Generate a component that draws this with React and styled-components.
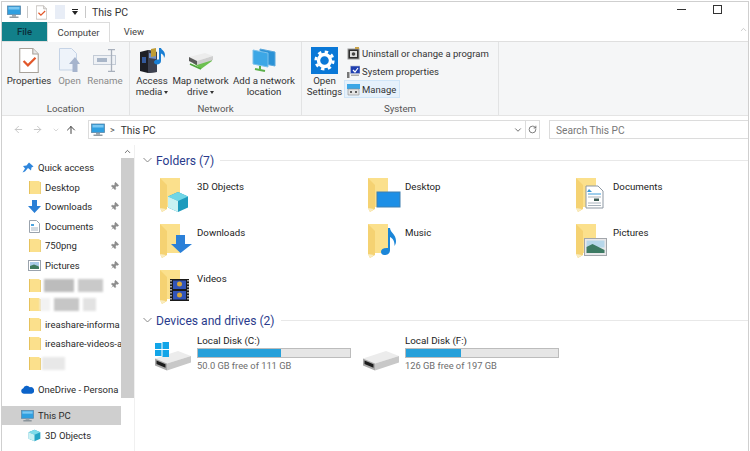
import React from "react";
import styled, { createGlobalStyle } from "styled-components";
import { ArrowLeft, ArrowRight, ArrowUp, ChevronDown, ChevronUp, RotateCw, Pin } from "lucide-react";

const Global = createGlobalStyle`
  html, body { margin: 0; padding: 0; background: #fff; overflow: hidden; }
  * { box-sizing: border-box; }
`;

const Window = styled.div`
  width: 750px; height: 451px; overflow: hidden; display: flex; flex-direction: column;
  padding: 1px 1px 0 1px; background: #fff; color: #222;
  font-family: Roboto, "Liberation Sans", sans-serif; font-size: 9.7px;
`;
const Frame = styled.div`
  flex: 1; min-height: 0; display: flex; flex-direction: column;
  border: 1px solid #cfcfcf; border-bottom: 0;
`;
const TitleBar = styled.div`
  height: 20px; flex: none; display: flex; align-items: center; padding-left: 5px; position: relative;
`;
const QuickIcon = styled.span`
  display: inline-flex; width: ${p => p.$w}px; margin-right: ${p => p.$gap}px;
`;
const Divider = styled.span`
  width: 1px; height: 12px; background: #c8c8c8; margin-right: ${p => p.$gap}px;
`;
const TitleText = styled.span`font-size: 10.5px; color: #333;`;
const WindowButtons = styled.div`
  margin-left: auto; display: flex; align-items: center; height: 20px; margin-top: -5px; padding-right: 26px; gap: 27px;
`;
const MinButton = styled.span`width: 9px; height: 1px; background: #333;`;
const MaxButton = styled.span`width: 9px; height: 9px; border: 1px solid #333;`;

const TabBar = styled.div`
  height: 19px; flex: none; display: flex; align-items: stretch; position: relative; font-size: 9.5px;
`;
const FileTab = styled.div`
  width: 45px; background: #12808a; color: #0c2f3a; font-weight: 500;
  display: flex; align-items: center; justify-content: center;
`;
const Tab = styled.div`
  width: ${p => p.$w}px; display: flex; align-items: center; justify-content: center; color: #444;
  ${p => p.$active && `
    background: #fff; border: 1px solid #dcdcdc; border-bottom: 0; margin-bottom: -1px; position: relative; z-index: 1;
  `}
`;
const Collapse = styled.span`
  position: absolute; right: 0; top: 3px; color: #bbb; display: inline-flex;
`;

const Ribbon = styled.div`
  height: 75px; flex: none; display: flex; background: #f5f6f7;
  border-top: 1px solid #dfdfdf; border-bottom: 1px solid #e4e4e4;
`;
const Group = styled.div`
  width: ${p => p.$w}px; flex: none; display: flex; flex-direction: column; justify-content: space-between;
  padding: 0 0 1px ${p => p.$pad}px; border-right: 1px solid #e2e3e4;
`;
const GroupBody = styled.div`display: flex; align-items: flex-start;`;
const GroupLabel = styled.div`
  text-align: center; color: #555; line-height: 11px; margin-left: ${p => -p.$pad}px;
`;
const BigButton = styled.div`
  width: ${p => p.$w}px; flex: none; display: flex; flex-direction: column; align-items: center; padding-top: 3px;
  color: ${p => (p.$disabled ? "#8a8a8a" : "#333")}; line-height: 11px; text-align: center; white-space: nowrap;
`;
const BigIcon = styled.div`height: 30px; display: flex; align-items: center; justify-content: center;`;
const Caret = styled.span`
  display: inline-block; vertical-align: middle; margin-left: 2px;
  border-left: 2.5px solid transparent; border-right: 2.5px solid transparent; border-top: 3px solid #333;
`;
const SmallList = styled.div`display: flex; flex-direction: column; padding-top: 2px;`;
const SmallItem = styled.div`
  height: 18px; display: flex; align-items: center; gap: 2px; padding: 0 3px 0 2px; color: #333; font-size: 9.5px;
  align-self: flex-start; border: 1px solid transparent; white-space: nowrap;
  ${p => p.$active && `background: #e6f1fb; border-color: #cfe5f8;`}
`;

const AddressRow = styled.div`
  height: 29px; flex: none; display: flex; align-items: center; padding: 0 0 2px 0; position: relative;
`;
const NavButtons = styled.div`display: flex; align-items: center; width: 86px; padding-left: 9px; color: #bbb;`;
const NavSlot = styled.span`
  width: ${p => p.$w}px; display: inline-flex; justify-content: center; color: ${p => p.$color || "#c4c4c4"};
`;
const AddressBox = styled.div`
  width: 438px; height: 19px; flex: none; border: 1px solid #dcdcdc; display: flex; align-items: center; padding: 1px 0 0 2px;
  font-size: 10.2px; color: #333;
`;
const Crumb = styled.span`margin: 0 6px 0 5px; color: #555; font-size: 9px;`;
const AddressEnd = styled.span`margin-left: auto; display: inline-flex; align-items: center; color: #555; padding-right: 2px;`;
const RefreshBox = styled.div`
  width: 14px; height: 19px; flex: none; border: 1px solid #dcdcdc; border-left: 0; display: flex; align-items: center; justify-content: center; color: #555;
`;
const SearchBox = styled.div`
  flex: 1; height: 19px; margin-left: 9px; border: 1px solid #dcdcdc; border-right: 0; display: flex; align-items: center; padding: 1px 0 0 6px;
  color: #777; font-size: 10.2px;
`;

const Main = styled.div`flex: 1; min-height: 0; display: flex;`;
const Sidebar = styled.div`width: 133px; flex: none; display: flex; border-right: 1px solid #f0f0f0;`;
const NavList = styled.div`width: 119px; flex: none; padding-top: 12.8px; overflow: hidden; font-size: 9.5px;`;
const NavRow = styled.div`
  height: 19.6px; display: flex; align-items: center; gap: 4px; white-space: nowrap;
  padding-left: ${p => (p.$depth ? 26 : 19)}px; position: relative; color: #2a2a2a;
  ${p => p.$gap && `margin-top: 6.4px;`}
  ${p => p.$selected && `background: #cfcfcf;`}
`;
const NavIcon = styled.span`width: 13px; flex: none; display: inline-flex; justify-content: center;`;
const Redacted = styled.span`
  display: inline-block; flex: none; height: 13px; width: ${p => p.$w}px; margin-left: ${p => p.$x || 0}px; margin-right: -4px; background: ${p => p.$c}; filter: blur(1px);
`;
const PinMark = styled.span`
  position: absolute; right: 2px; top: 5px; color: #8d8d8d; display: inline-flex; transform: rotate(45deg);
`;
const Scrollbar = styled.div`width: 13px; flex: none; display: flex; flex-direction: column; background: #fff;`;
const ScrollUp = styled.div`height: 13px; display: flex; align-items: center; justify-content: center; color: #444;`;
const Thumb = styled.div`height: 240px; background: #cdcdcd;`;

const Content = styled.div`flex: 1; min-width: 0; padding: 8px 0 0 8px;`;
const SectionHead = styled.div`
  height: 14px; display: flex; align-items: center; gap: 4px; color: #2a3b8c; font-size: 12.1px; white-space: nowrap;
`;
const SectionTitle = styled.span`padding-top: 1px;`;
const HeadRule = styled.span`flex: 1; height: 1px; background: #e8e8e8; margin-left: 2px;`;
const FolderGrid = styled.div`
  display: grid; grid-template-columns: repeat(3, 208px); grid-auto-rows: 46px; padding: 8px 0 0 17px;
`;
const Tile = styled.div`display: flex; padding-top: 3px;`;
const TileIcon = styled.span`width: 37px; flex: none; display: inline-flex;`;
const TileLabel = styled.span`font-size: 9.7px; line-height: 14px; padding-top: 2px; color: #222;`;
const DriveRow = styled.div`display: flex; padding: 6px 0 0 12px;`;
const Drive = styled.div`width: 208px; display: flex;`;
const DriveIconBox = styled.span`width: 42px; flex: none; display: inline-flex; padding-top: 11px;`;
const DriveInfo = styled.div`width: 154px; font-size: 9.8px; line-height: 14px; padding-top: 1px;`;
const Bar = styled.div`
  height: 10px; margin: 0 0 1px; background: #e6e6e6; border: 1px solid #bcbcbc;
  &::before { content: ""; display: block; height: 100%; width: ${p => p.$fill}%; background: #26a0da; }
`;
const DriveFree = styled.div`color: #6d6d6d; font-size: 9.3px;`;

const PcIcon = ({ s = 14 }) => (
  <svg width={s} height={s} viewBox="0 0 14 14">
    <rect x="0.5" y="1" width="13" height="8.5" fill="#2f9fe0" stroke="#5c87a8" strokeWidth=".8" />
    <rect x="1.5" y="2" width="11" height="2.5" fill="#7cc8f2" />
    <rect x="5" y="10" width="4" height="1.6" fill="#9aa6ae" />
    <rect x="2.5" y="11.6" width="9" height="1.2" fill="#76838c" />
  </svg>
);
const FolderSmall = () => (
  <svg width="12" height="13" viewBox="0 0 12 13">
    <path d="M0 0h10l1 1v12H1z" fill="#fbe08c" />
    <path d="M0 0h1v13H0z" fill="#e6c25c" />
    <path d="M11 1h1v12h-1z" fill="#ecd07a" />
  </svg>
);
const StarPin = () => (
  <svg width="12" height="12" viewBox="0 0 12 12"><path d="M7 .5l4.5 4-2 1-.5 3-3-2.5-3 3.5-2.5 1 2.5-4L1 4l3.5-.5z" fill="#2f86dc" /></svg>
);
const DownArrowSmall = () => (
  <svg width="13" height="13" viewBox="0 0 13 13"><path d="M4 0h5v6h4l-6.500 7L0 6h4z" fill="#2a7fd6" /></svg>
);
const DocSmall = () => (
  <svg width="11" height="13" viewBox="0 0 11 13">
    <path d="M.5.5h7l3 3v9H.5z" fill="#fff" stroke="#9aa3ad" />
    <path d="M2 4h3v2H2z" fill="#4aa3df" /><path d="M2 8h7M2 10h7" stroke="#a5b4c2" />
  </svg>
);
const PicSmall = () => (
  <svg width="13" height="11" viewBox="0 0 13 11">
    <rect x=".5" y=".5" width="12" height="10" fill="#fff" stroke="#9aa3ad" />
    <rect x="2" y="2" width="9" height="4" fill="#a9cbe8" /><path d="M2 6l4-1.500 5 2V9H2z" fill="#3e7a5e" />
  </svg>
);
const Cloud = () => (
  <svg width="14" height="9" viewBox="0 0 14 9"><path d="M3 9a3 3 0 0 1-.5-5.900A4 4 0 0 1 9.500 2 3.500 3.500 0 0 1 11.500 9z" fill="#0b63c9" /></svg>
);
const Cube = ({ s = 13 }) => (
  <svg width={s} height={s} viewBox="0 0 20 20">
    <path d="M10 1l9 4v10l-9 4-9-4V5z" fill="#25a5c5" /><path d="M10 1l9 4-9 4-9-4z" fill="#7fdcea" /><path d="M1 5l9 4v10l-9-4z" fill="#c9f1f3" />
  </svg>
);
const overlays = {
  cube: <g transform="translate(8 14)"><path d="M10 0l10 4.500v11L10 20 0 15.500v-11z" fill="#1d9bbd" /><path d="M10 0l10 4.500L10 9 0 4.500z" fill="#6fd6e6" /><path d="M0 4.500L10 9v11L0 15.500z" fill="#c8f2f2" /></g>,
  desktop: <g><rect x="9" y="14" width="23" height="15" fill="#1d8fe6" stroke="#3f7fb0" /></g>,
  doc: <g><path d="M10 8h12l5 5v17H10z" fill="#fff" stroke="#8d98a3" /><path d="M13 11l3 3h-5z" fill="#3f9bd8" /><path d="M12 16h13" stroke="#3f9bd8" /><path d="M12 19h13M12 25h13M12 27.500h13" stroke="#a8b3bd" /><rect x="18" y="20.500" width="5" height="2.500" fill="#3c5a52" /></g>,
  down: <path d="M16 11h9v9h7L20.500 29 11 20h5z" fill="#2b80d8" />,
  music: <path d="M20 4h2c.5 5 6 6 6 13 0 2-.5 3.500-1.500 5 .3-5-2-8-4.500-9v13c0 4-3 5-5.500 5S13 29.500 13 27.500s2.500-4 7-3.500z" fill="#1b86d8" />,
  pic: <g><rect x="8.500" y="14.500" width="22" height="17" fill="#e8e8ea" stroke="#a2a6ab" /><rect x="10.500" y="16.500" width="18" height="7" fill="#b7d7ea" /><path d="M10.500 23l6-3 12 6v3h-18z" fill="#3c7a63" /></g>,
  film: <g><rect x="10" y="9" width="19" height="22" fill="#1a1a1a" /><path d="M11 10v20M28 10v20" stroke="#ddd" strokeWidth="1.400" strokeDasharray="1.500 1.500" /><rect x="13" y="10.500" width="13" height="8.500" fill="#3154b8" /><rect x="13" y="21" width="13" height="8.500" fill="#3154b8" /><circle cx="19.500" cy="14" r="2.500" fill="#d6a63a" /><circle cx="19.500" cy="25" r="2.500" fill="#d6a63a" /></g>,
};
const BigFolder = ({ over }) => (
  <svg width="36" height="36" viewBox="0 0 36 36" style={{ overflow: "visible" }}>
    <path d="M0 0h20v29H6z" fill="#fbe08c" />
    <path d="M0 0l7 7v24l-5 3-2-4z" fill="#f5d272" />
    <path d="M0 30l6 1-4 3z" fill="#f9ecc0" />
    {overlays[over]}
  </svg>
);
const DriveIcon = ({ win }) => (
  <svg width="37" height="28" viewBox="0 0 37 28" style={{ overflow: "visible" }}>
    <path d="M0 14.500L23 7l13 5-24 7.500z" fill="#ececec" />
    <path d="M0 14.500l12 5v7L0 21.500z" fill="#a8a8a8" />
    <path d="M1.500 16.500l9 3.800v3.500l-9-3.800z" fill="#1c1c1c" />
    <path d="M12 19.500l24-7.500v6.500l-24 8z" fill="#c8c8c8" />
    {win && <g fill="#12a5e8"><rect x="0" y="-1" width="6.500" height="6" /><rect x="7.500" y="-2" width="6.500" height="7" /><rect x="0" y="6" width="6.500" height="6" /><rect x="7.500" y="6" width="6.500" height="7" /></g>}
  </svg>
);
const CheckDoc = ({ s = 14 }) => (
  <svg width={s * 0.8} height={s} viewBox="0 0 18 23">
    <path d="M.5.5h12l5 5v17H.5z" fill="#fff" stroke="#a8a29a" />
    <path d="M12.500.5v5h5" fill="#e7e7e7" stroke="#a8a29a" />
    <path d="M4 12l4 4 7-7" fill="none" stroke="#e2572a" strokeWidth="2" />
  </svg>
);
const OpenIcon = () => (
  <svg width="22" height="25" viewBox="0 0 22 25">
    <path d="M.5.500h12l5 5V22H.5z" fill="#eef3fa" stroke="#c5d3e6" />
    <path d="M17 9l-6 7h3.500v8h5v-8H22z" fill="#a6b4cd" transform="translate(-1 0)" />
  </svg>
);
const RenameIcon = () => (
  <svg width="25" height="23" viewBox="0 0 25 23">
    <rect x=".5" y="6.500" width="22" height="9" fill="#eef1f5" stroke="#c3cbd6" />
    <rect x="4" y="9" width="10" height="4" fill="#a9b6c8" />
    <path d="M15 .5h7M15 22.500h7M18.500 1v21" stroke="#a8b0bc" strokeWidth="1.300" fill="none" />
  </svg>
);
const MediaIcon = () => (
  <svg width="27" height="26" viewBox="0 0 27 26">
    <path d="M1 5l8-2 9 2v20l-9 1-8-2z" fill="#1d1f26" />
    <path d="M9 3l9 2v20l-9 1z" fill="#3d4150" />
    <path d="M10 6l7 1v5l-7-1z" fill="#6f8fc8" /><path d="M3 10h4v6H3z" fill="#345a9c" />
    <path d="M12 2l5-1v8l-5 1z" fill="#bf9c34" />
    <path d="M20 1h2c.5 2 4 3 4 7 0 1-.3 2-1 3 .2-2-1-4-3-4.500V14c0 2-2 3.500-4 3.500s-3-1-3-2.500 2-3 5-2.500z" fill="#1a7fd4" />
  </svg>
);
const NetDrive = () => (
  <svg width="26" height="24" viewBox="0 0 26 24">
    <path d="M5 15l4-1 15-5v4L13 21z" fill="#6cc04f" />
    <path d="M1 9l16-4 8 3-16 5z" fill="#ececec" />
    <path d="M1 9l8 4v4l-8-4z" fill="#5a5a5a" /><path d="M9 13l16-5v4L9 17z" fill="#cfcfcf" />
    <path d="M2 16l11 5" stroke="#4fa83c" strokeWidth="1.800" />
  </svg>
);
const NetLocation = () => (
  <svg width="24" height="26" viewBox="0 0 24 26">
    <path d="M8 2l15 3v14l-15-3z" fill="#2b92d6" stroke="#5aa8dc" />
    <path d="M1 3l15 3v14L1 17z" fill="#3ca7e6" stroke="#7cc1ea" />
    <path d="M3 22l10 2M8 19v4" stroke="#5cb04a" strokeWidth="2" />
  </svg>
);
const SettingsIcon = () => (
  <svg width="27" height="27" viewBox="0 0 27 27">
    <rect width="27" height="27" fill="#0a78d7" />
    <circle cx="13.500" cy="13.500" r="6" fill="none" stroke="#fff" strokeWidth="3.400" />
    <circle cx="13.500" cy="13.500" r="8.700" fill="none" stroke="#fff" strokeWidth="2.800" strokeDasharray="3.400 3.430" />
  </svg>
);
const UninstallIcon = () => (
  <svg width="13" height="13" viewBox="0 0 13 13">
    <rect x="1" y="2" width="11" height="10" fill="#2d2d2d" stroke="#999" />
    <rect x="3" y="4" width="7" height="6" fill="#ddd" /><circle cx="6.500" cy="7" r="1.800" fill="#444" />
    <path d="M8 0h4v2H8z" fill="#c8a24a" />
  </svg>
);
const SysIcon = () => (
  <svg width="13" height="13" viewBox="0 0 13 13">
    <rect x="3.500" y="1" width="9.500" height="7.500" fill="#1f3fb0" stroke="#b7bfd2" strokeWidth=".6" />
    <path d="M6 5l2 2 3-4" fill="none" stroke="#fff" strokeWidth="1.200" />
    <path d="M0 7h2.500v6H0z" fill="#777" /><path d="M4 9.500h8V11H4z" fill="#aaa" />
  </svg>
);
const ManageIcon = () => (
  <svg width="13" height="13" viewBox="0 0 13 13">
    <rect x="0" y="1" width="13" height="5" fill="#3ca7e6" />
    <path d="M1 6h11v6H1z" fill="#e4e4e4" stroke="#8a8a8a" strokeWidth=".6" />
    <circle cx="4" cy="9" r="1" fill="#333" /><circle cx="9" cy="9" r="1" fill="#333" />
  </svg>
);
const ChevronSmall = () => (
  <svg width="9" height="6" viewBox="0 0 9 6"><path d="M.5 1l4 4 4-4" fill="none" stroke="#8a8a8a" /></svg>
);
const PinIcon = () => <PinMark><Pin size={9} fill="currentColor" strokeWidth={1.500} /></PinMark>;

const navRows = [
  { icon: <FolderSmall />, label: "Desktop", pin: true },
  { icon: <DownArrowSmall />, label: "Downloads", pin: true },
  { icon: <DocSmall />, label: "Documents", pin: true },
  { icon: <FolderSmall />, label: "750png", pin: true },
  { icon: <PicSmall />, label: "Pictures", pin: true },
  { icon: <FolderSmall />, hidden: [[30, "#bcbcbc", -1], [25, "#c9c9c9", 4]], pin: true },
  { icon: <FolderSmall />, hidden: [[10, "#f2f2f2", -5], [25, "#c6c6c6", 4], [13, "#e2e2e2", 4]] },
  { icon: <FolderSmall />, label: "ireashare-informa" },
  { icon: <FolderSmall />, label: "ireashare-videos-a" },
  { icon: <FolderSmall />, hidden: [[23, "#e8e8e8", -3]] },
];
const folders = [
  ["3D Objects", "cube"], ["Desktop", "desktop"], ["Documents", "doc"],
  ["Downloads", "down"], ["Music", "music"], ["Pictures", "pic"], ["Videos", "film"],
];
const drives = [
  { name: "Local Disk (C:)", free: "50.0 GB free of 111 GB", fill: 54.5, win: true },
  { name: "Local Disk (F:)", free: "126 GB free of 197 GB", fill: 36 },
];

export default function App() {
  return (
    <>
      <Global />
      <Window>
        <Frame>
          <TitleBar>
            <QuickIcon $w={14} $gap={6}><PcIcon /></QuickIcon>
            <Divider $gap={8} />
            <QuickIcon $w={11} $gap={8}><CheckDoc s={15} /></QuickIcon>
            <QuickIcon $w={10} $gap={7}>
              <svg width="10" height="14" viewBox="0 0 10 14"><rect width="10" height="14" fill="#e8edf6" /></svg>
            </QuickIcon>
            <QuickIcon $w={6} $gap={7}>
              <svg width="6" height="6" viewBox="0 0 6 6"><path d="M0 0h6v1H0zM0 2h6L3 6z" fill="#222" /></svg>
            </QuickIcon>
            <Divider $gap={6} />
            <TitleText>This PC</TitleText>
            <WindowButtons><MinButton /><MaxButton /></WindowButtons>
          </TitleBar>
          <TabBar>
            <FileTab>File</FileTab>
            <Tab $w={63} $active>Computer</Tab>
            <Tab $w={48}>View</Tab>
            <Collapse><ChevronUp size={9} /></Collapse>
          </TabBar>
          <Ribbon>
            <Group $w={128} $pad={2}>
              <GroupBody>
                <BigButton $w={50}><BigIcon><CheckDoc s={25} /></BigIcon>Properties</BigButton>
                <BigButton $w={31} $disabled><BigIcon><OpenIcon /></BigIcon>Open</BigButton>
                <BigButton $w={40} $disabled><BigIcon><RenameIcon /></BigIcon>Rename</BigButton>
              </GroupBody>
              <GroupLabel $pad={2}>Location</GroupLabel>
            </Group>
            <Group $w={172} $pad={5}>
              <GroupBody>
                <BigButton $w={34}><BigIcon><MediaIcon /></BigIcon>Access<br /><span>media<Caret /></span></BigButton>
                <BigButton $w={63}><BigIcon><NetDrive /></BigIcon>Map network<br /><span>drive<Caret /></span></BigButton>
                <BigButton $w={64}><BigIcon><NetLocation /></BigIcon>Add a network<br />location</BigButton>
              </GroupBody>
              <GroupLabel $pad={5}>Network</GroupLabel>
            </Group>
            <Group $w={197} $pad={3}>
              <GroupBody>
                <BigButton $w={39}><BigIcon><SettingsIcon /></BigIcon>Open<br />Settings</BigButton>
                <SmallList>
                  <SmallItem><UninstallIcon />Uninstall or change a program</SmallItem>
                  <SmallItem><SysIcon />System properties</SmallItem>
                  <SmallItem $active><ManageIcon />Manage</SmallItem>
                </SmallList>
              </GroupBody>
              <GroupLabel $pad={3}>System</GroupLabel>
            </Group>
          </Ribbon>
          <AddressRow>
            <NavButtons>
              <NavSlot $w={14}><ArrowLeft size={11} /></NavSlot>
              <NavSlot $w={24}><ArrowRight size={11} /></NavSlot>
              <NavSlot $w={14}><ChevronDown size={8} /></NavSlot>
              <NavSlot $w={16} $color="#444"><ArrowUp size={12} /></NavSlot>
            </NavButtons>
            <AddressBox>
              <PcIcon />
              <Crumb>&gt;</Crumb>This PC
              <AddressEnd><ChevronDown size={10} /></AddressEnd>
            </AddressBox>
            <RefreshBox><RotateCw size={9} /></RefreshBox>
            <SearchBox>Search This PC</SearchBox>
          </AddressRow>
          <Main>
            <Sidebar>
              <NavList>
                <NavRow><NavIcon><StarPin /></NavIcon>Quick access</NavRow>
                {navRows.map((r, i) => (
                  <NavRow key={i} $depth={1}>
                    <NavIcon>{r.icon}</NavIcon>
                    {r.label}
                    {r.hidden && r.hidden.map(([w, c, x], j) => <Redacted key={j} $w={w} $c={c} $x={x} />)}
                    {r.pin && <PinIcon />}
                  </NavRow>
                ))}
                <NavRow $gap><NavIcon><Cloud /></NavIcon>OneDrive - Persona</NavRow>
                <NavRow $gap $selected><NavIcon><PcIcon /></NavIcon>This PC</NavRow>
                <NavRow $depth={1}><NavIcon><Cube /></NavIcon>3D Objects</NavRow>
              </NavList>
              <Scrollbar>
                <ScrollUp><ChevronUp size={9} /></ScrollUp>
                <Thumb />
              </Scrollbar>
            </Sidebar>
            <Content>
              <SectionHead><ChevronSmall /><SectionTitle>Folders (7)</SectionTitle><HeadRule /></SectionHead>
              <FolderGrid>
                {folders.map(([name, over]) => (
                  <Tile key={name}>
                    <TileIcon><BigFolder over={over} /></TileIcon>
                    <TileLabel>{name}</TileLabel>
                  </Tile>
                ))}
              </FolderGrid>
              <SectionHead><ChevronSmall /><SectionTitle>Devices and drives (2)</SectionTitle><HeadRule /></SectionHead>
              <DriveRow>
                {drives.map(d => (
                  <Drive key={d.name}>
                    <DriveIconBox><DriveIcon win={d.win} /></DriveIconBox>
                    <DriveInfo>
                      {d.name}
                      <Bar $fill={d.fill} />
                      <DriveFree>{d.free}</DriveFree>
                    </DriveInfo>
                  </Drive>
                ))}
              </DriveRow>
            </Content>
          </Main>
        </Frame>
      </Window>
    </>
  );
}
